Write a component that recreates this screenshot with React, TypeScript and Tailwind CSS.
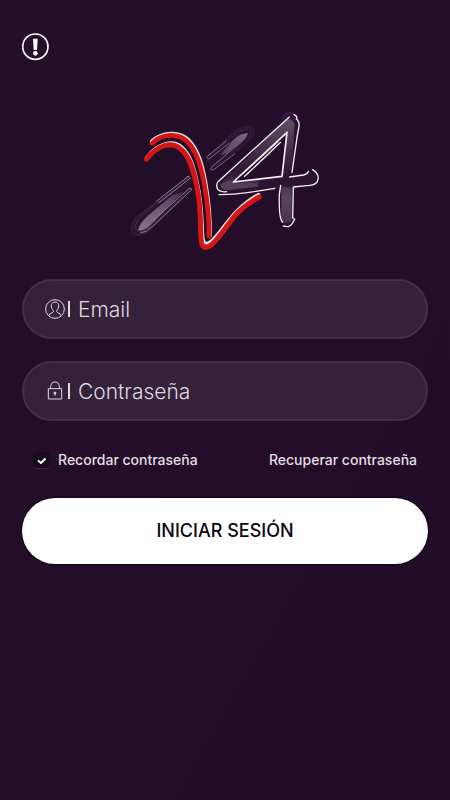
import { useState } from "react";
import type { ReactNode } from "react";

function Logo() {
  return (
    <svg viewBox="0 0 630 480" className="h-40 w-[210px]" fill="none" strokeLinecap="round" strokeLinejoin="round" role="img" aria-label="X4">
      <defs>
        <linearGradient id="lowerBar" x1="55" y1="390" x2="215" y2="240" gradientUnits="userSpaceOnUse">
          <stop offset="0" stopColor="#85788b" />
          <stop offset="0.5" stopColor="#665570" />
          <stop offset="1" stopColor="#2a1432" />
        </linearGradient>
        <linearGradient id="upperBar" x1="385" y1="95" x2="270" y2="200" gradientUnits="userSpaceOnUse">
          <stop offset="0" stopColor="#7d6d85" />
          <stop offset="0.6" stopColor="#574261" />
          <stop offset="1" stopColor="#28102f" />
        </linearGradient>
        <linearGradient id="four" x1="500" y1="50" x2="500" y2="370" gradientUnits="userSpaceOnUse">
          <stop offset="0" stopColor="#62506a" />
          <stop offset="0.5" stopColor="#2e1936" />
          <stop offset="0.75" stopColor="#59475f" />
          <stop offset="1" stopColor="#45324d" />
        </linearGradient>
      </defs>

      {/* grey strokes of the X */}
      <path d="M207 227 L48 350 Q26 376 38 396 Q52 410 84 392 L212 266" fill="#2a1432" stroke="#33203b" strokeWidth="4" />
      <path d="M198 236 L64 344 Q46 362 44 382 Q60 402 90 378 L208 268" stroke="#47344f" strokeWidth="2" />
      <path d="M54 388 Q58 366 84 344 L158 282 L190 272 L92 372 Q72 392 54 388Z" fill="url(#lowerBar)" />
      <path d="M205 226 L110 300 M210 232 L116 306 M201 227 Q209 223 210 232" stroke="#8b7990" strokeWidth="3" />
      <path d="M208 262 L102 356 M215 266 L98 376 Q80 394 62 396 M208 262 Q216 259 215 266" stroke="#8b7990" strokeWidth="3" />
      <path d="M260 168 L350 88 Q382 68 400 84 Q408 102 378 126 L274 206" fill="#2a1231" stroke="#351b3e" strokeWidth="4" />
      <path d="M266 166 L356 94 Q380 78 392 88 Q398 100 372 118 L280 194" stroke="#432a4c" strokeWidth="2" />
      <path d="M300 162 L340 116 Q366 94 384 97 Q380 111 356 132 L324 158Z" fill="url(#upperBar)" />
      <path d="M318 120 L262 166 Q258 174 267 174 L328 126 M322 158 L273 200 Q270 208 280 207 L345 158" stroke="#796681" strokeWidth="3" />

      {/* 4 */}
      <path d="M500 44 Q514 34 530 48 L534 80 L516 216 L590 216 Q596 246 568 248 L520 256 L520 354 Q504 380 484 362 L478 264 L300 274 Q282 264 296 246 L494 52Z M340 243 L488 224 L502 94Z" fill="#2a1431" fillRule="evenodd" />
      <path d="M302 250 L494 60 Q514 46 524 70 L514 210 L490 222 L502 94 L342 240 L420 236 L410 258 L320 268 Q300 264 302 250Z" fill="url(#four)" />
      <path d="M302 252 L328 236 L348 247 L398 246 L420 254 L330 266 Q302 268 302 252Z" fill="#50405a" />
      <path d="M484 256 L515 260 L515 358 Q502 374 484 358Z" fill="url(#four)" />
      <path d="M516 40 Q534 42 538 66 M486 50 Q500 32 518 38" stroke="#411653" strokeWidth="7" />
      <g stroke="#f5f0f5" strokeWidth="4">
        <path d="M508 48 L294 242 Q286 254 294 266 Q306 275 320 272" />
        <path d="M522 41 Q534 46 529 54 Q539 62 537 76 L531 110 L516 214" />
        <path d="M501 94 L340 243 L486 226 Z" strokeWidth="5" />
        <path d="M482 124 L374 226" />
        <path d="M476 122 L370 218" strokeWidth="2" />
        <path d="M297 281 Q350 282 464 262" />
        <path d="M509 228 L551 222 Q562 220 566 211" />
        <path d="M578 206 Q602 222 592 242 Q584 254 560 254 L520 258 L518 350 L524 355 Q514 378 502 377 L490 375" />
        <path d="M482 253 L478 280 Q476 354 488 364" />
      </g>

      {/* red double line */}
      <path d="M94 121 C125 91 178 88 206 116 C236 147 248 190 258 247 C269 310 272 360 271 405" stroke="#eee0e7" strokeWidth="9" />
      <path d="M96 127 C126 97 176 95 202 122 C231 152 243 196 253 250 C265 316 268 360 267 406" stroke="#d51617" strokeWidth="14" />
      <path d="M79 169 C113 125 160 113 187 139 C214 161 227 213 238 275 C248 337 246 374 249 412 Q254 440 279 415 C304 390 326 352 352 328 Q383 297 416 280" stroke="#eee0e7" strokeWidth="9" />
      <path d="M79 175 C113 131 155 119 182 144 C211 166 224 218 234 276 C244 336 240 374 243 414 Q245 456 277 429 C302 405 326 365 352 336 Q383 306 418 288" stroke="#d51617" strokeWidth="15" />
    </svg>
  );
}

function UserIcon() {
  return (
    <svg viewBox="0 0 60 60" className="h-5 w-5" fill="none" stroke="#dedae0" strokeWidth="3">
      <circle cx="30" cy="30" r="28" />
      <path d="M12 50 Q13 43 22 41 Q28 38 23 32 C15 22 19 9 30 9 C41 9 45 22 37 32 Q32 38 38 41 Q47 43 48 50" />
    </svg>
  );
}

function LockIcon() {
  return (
    <svg viewBox="0 0 60 60" className="h-5 w-5" fill="none" stroke="#dedae0" strokeWidth="3">
      <path d="M10 23 H50 V54 H10 Z M17 23 V17 Q18 3 30 3 Q42 3 43 17 V23" />
      <circle cx="30" cy="36" r="3" fill="#dedae0" />
      <path d="M30 36 V44" />
    </svg>
  );
}

type FieldProps = {
  id: string;
  type: string;
  label: string;
  icon: ReactNode;
  value: string;
  onChange: (value: string) => void;
};

function Field({ id, type, label, icon, value, onChange }: FieldProps) {
  return (
    <div className="flex h-[60px] items-center rounded-full border-2 border-[#432f4a] bg-[#34213a] pr-6 pl-[21px]">
      <label htmlFor={id} aria-label={label} className="flex shrink-0 items-center gap-[3px]">
        {icon}
        <span className="h-4 w-0.5 bg-[#dedae0]" />
      </label>
      <input
        id={id}
        type={type}
        aria-label={label}
        placeholder={label}
        value={value}
        onChange={(e) => onChange(e.target.value)}
        className="ml-2 h-full min-w-0 flex-1 bg-transparent text-[21px] font-light text-[#dedae0] outline-none placeholder:text-[#dedae0]"
      />
    </div>
  );
}

export default function App() {
  const [email, setEmail] = useState("");
  const [password, setPassword] = useState("");
  const [remember, setRemember] = useState(true);

  return (
    <div className="min-h-screen bg-linear-to-br from-[#230f29] to-[#230b27] px-[22px] pt-[33px] pb-8 font-['Inter',sans-serif]">
      <header>
        <button type="button" aria-label="Información" className="block">
          <svg viewBox="0 0 84 84" className="h-7 w-7" fill="none" stroke="#fff">
            <circle cx="40" cy="41" r="38" strokeWidth="5" />
            <path d="M33 17 H47 L45 51 H35 Z" fill="#fff" stroke="none" />
            <circle cx="40" cy="61" r="7" fill="#fff" stroke="none" />
          </svg>
        </button>
      </header>

      <main>
        <div className="mt-10 flex justify-center">
          <Logo />
        </div>

        <form className="mt-[18px]" onSubmit={(e) => e.preventDefault()}>
          <div className="flex flex-col gap-[22px]">
            <Field id="email" type="email" label="Email" icon={<UserIcon />} value={email} onChange={setEmail} />
            <Field id="password" type="password" label="Contraseña" icon={<LockIcon />} value={password} onChange={setPassword} />
          </div>

          <div className="mt-[29px] flex h-5 items-center justify-between px-[11px] text-sm font-medium text-[#e3dfe5]">
            <label className="flex items-center gap-2">
              <span className="relative block h-[17px] w-[17px]">
                <input
                  type="checkbox"
                  checked={remember}
                  onChange={(e) => setRemember(e.target.checked)}
                  className="peer block h-[17px] w-[17px] appearance-none rounded-sm border-b border-[#3a2840] bg-[#180b1d]"
                />
                <svg
                  viewBox="0 0 17 17"
                  className="pointer-events-none invisible absolute inset-0 h-[17px] w-[17px] peer-checked:visible"
                  fill="none"
                  stroke="#fff"
                  strokeWidth="2"
                >
                  <path d="M5 8.5 L8 11 L12.5 6.5" />
                </svg>
              </span>
              Recordar contraseña
            </label>
            <a href="#recuperar">Recuperar contraseña</a>
          </div>

          <button type="submit" className="mt-7 h-[66px] w-full rounded-full bg-white text-lg font-medium text-[#0c0610] shadow-[0_0_1px_1px_#12051a]">
            INICIAR SESIÓN
          </button>
        </form>
      </main>
    </div>
  );
}
